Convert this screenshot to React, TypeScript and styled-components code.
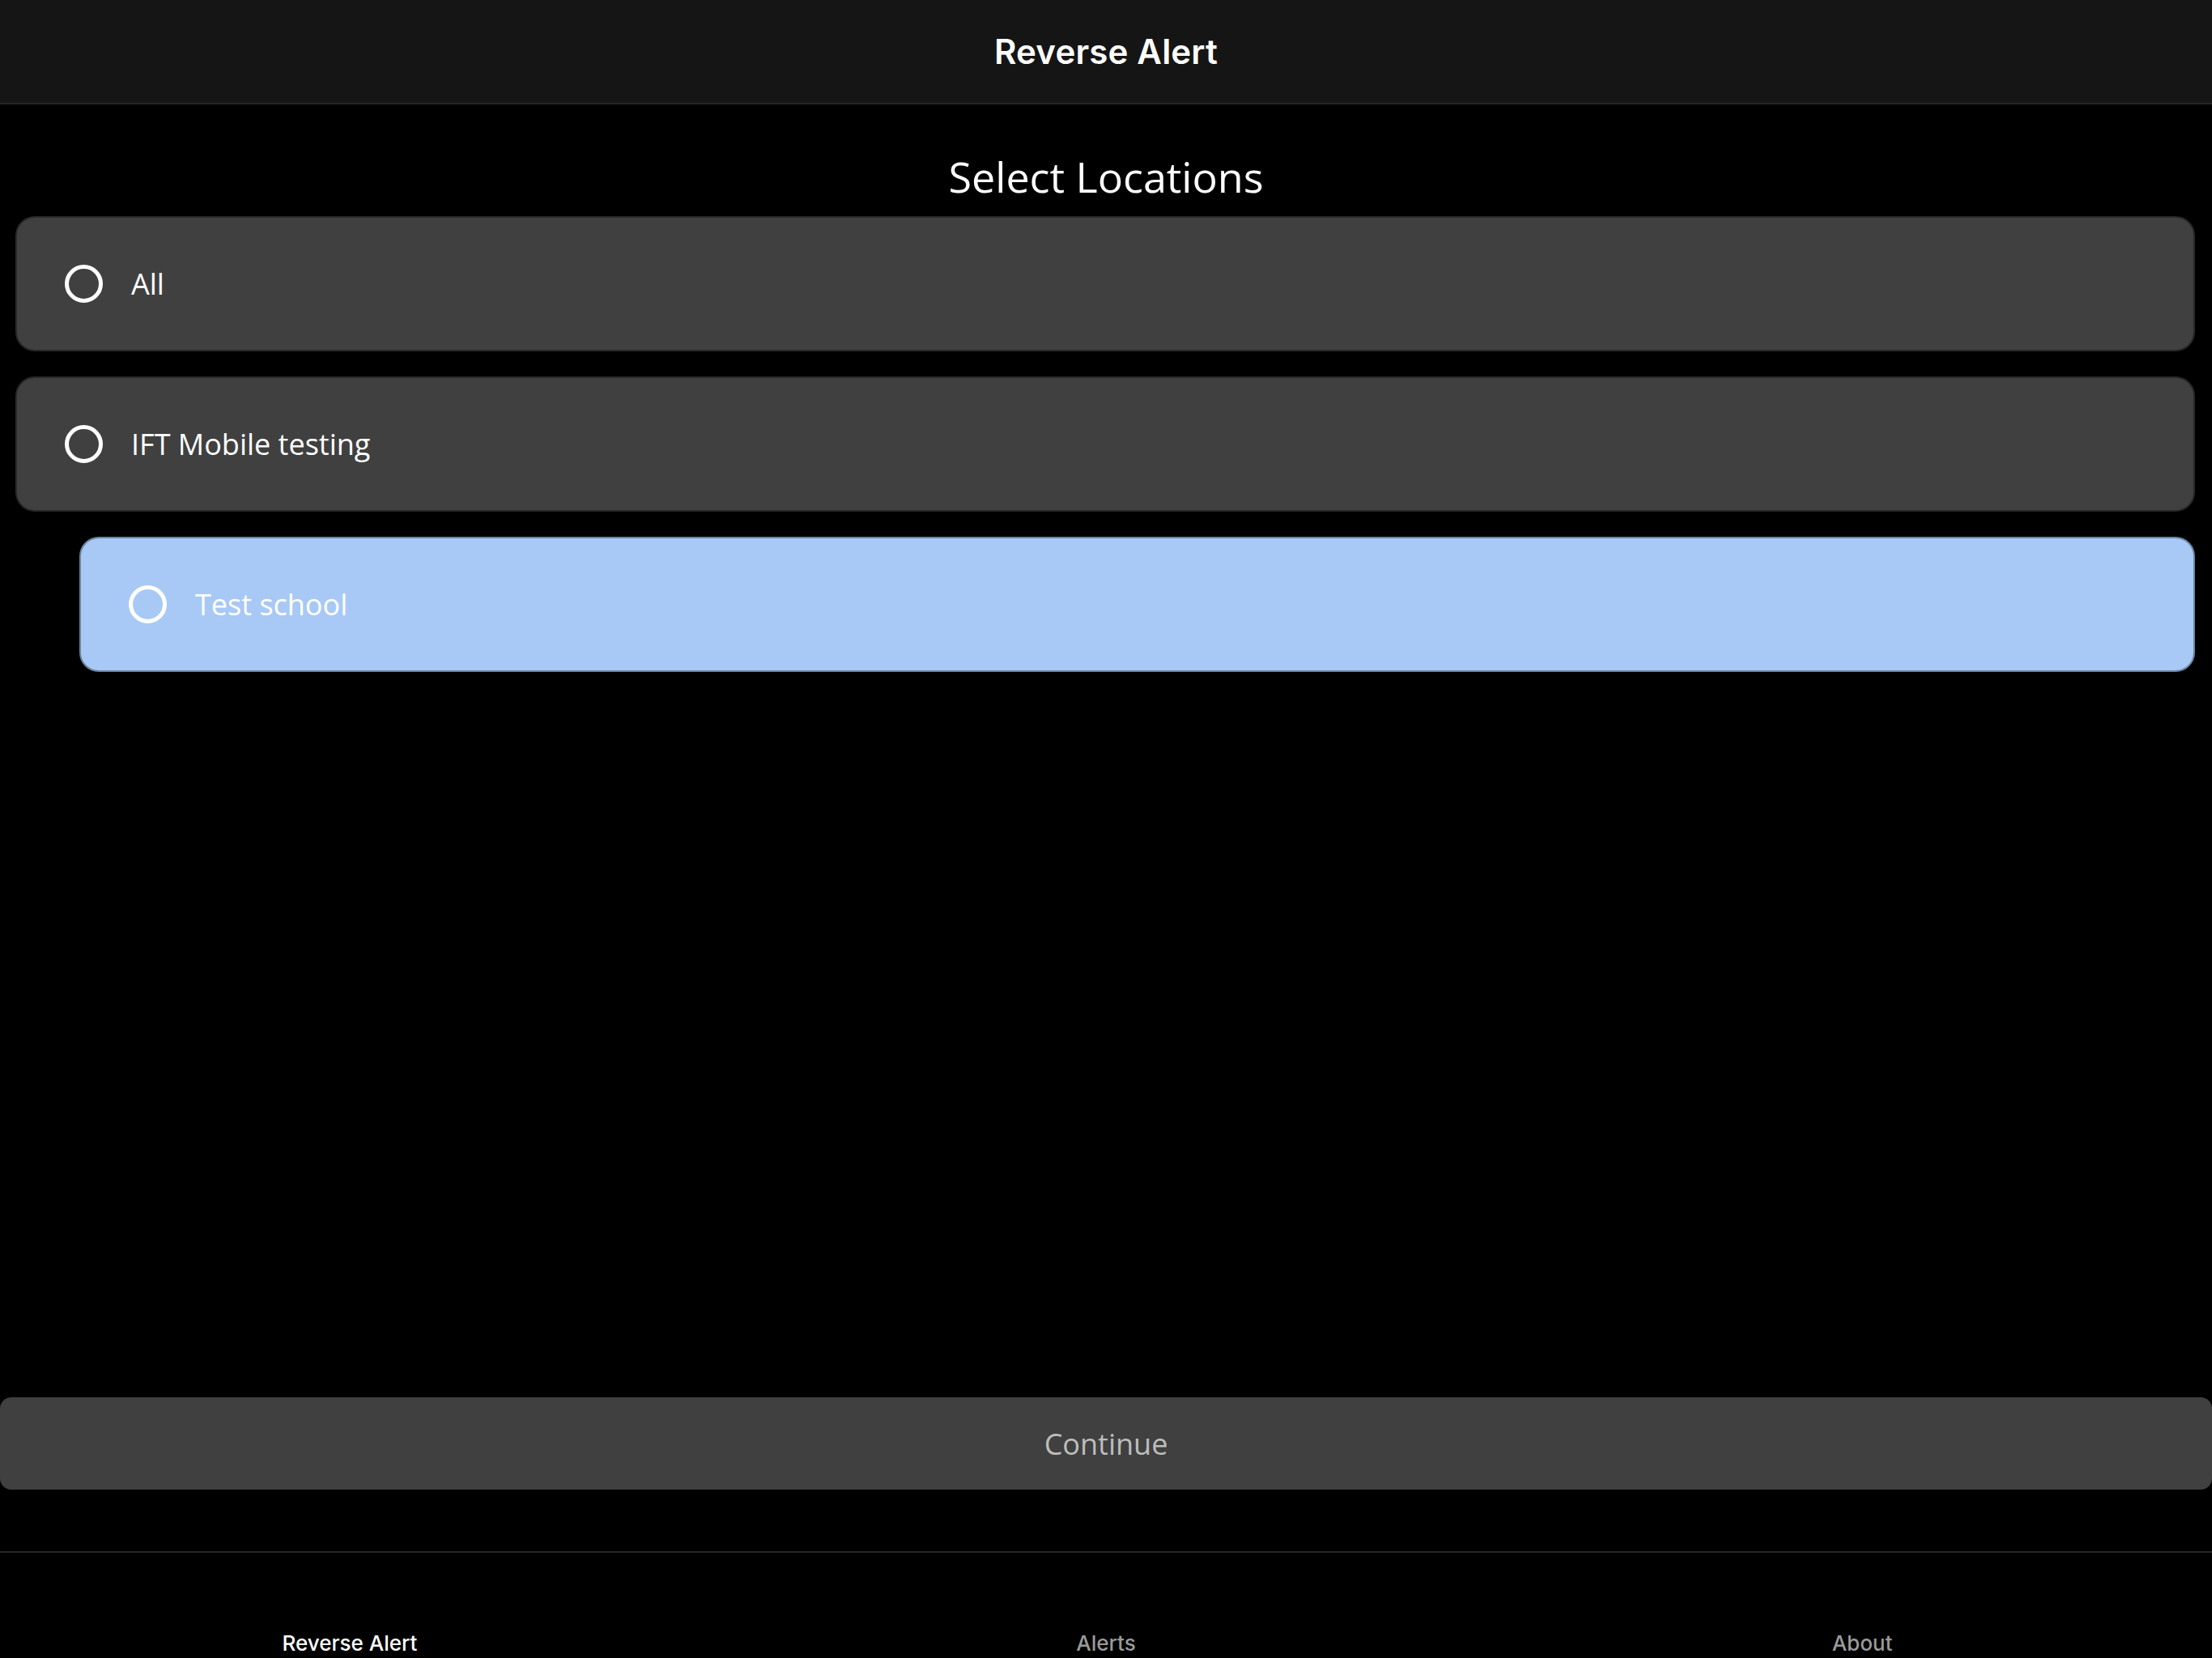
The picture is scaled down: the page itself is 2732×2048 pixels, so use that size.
import React, { useState } from 'react';
import styled, { createGlobalStyle } from 'styled-components';

const GlobalStyle = createGlobalStyle`
  * {
    box-sizing: border-box;
  }
  html,
  body {
    margin: 0;
    padding: 0;
    background: #000000;
  }
  body {
    font-family: 'Open Sans', 'Noto Sans', sans-serif;
    color: #ffffff;
  }
`;

const Screen = styled.div`
  width: 2732px;
  height: 2048px;
  display: flex;
  flex-direction: column;
  background: #000000;
  overflow: hidden;
`;

const NavBar = styled.header`
  height: 129px;
  flex-shrink: 0;
  display: flex;
  align-items: center;
  justify-content: center;
  background: #151515;
  border-bottom: 2px solid #262626;
  .title {
    font-family: 'Inter', 'Liberation Sans', sans-serif;
    font-weight: 600;
    font-size: 42px;
    letter-spacing: 0.2px;
    color: #ffffff;
  }
`;

const Main = styled.main`
  flex: 1;
  display: flex;
  flex-direction: column;
  padding: 53px 0 76px;
`;

const Heading = styled.h1`
  margin: 0 0 14px;
  text-align: center;
  font-family: 'Open Sans', sans-serif;
  font-weight: 400;
  font-size: 52px;
  line-height: 71px;
  color: #ffffff;
`;

const LocationList = styled.ul`
  list-style: none;
  margin: 0;
  padding: 0 21px 0 19px;
  display: flex;
  flex-direction: column;
  gap: 31px;
  flex: 1;
`;

const LocationRow = styled.li<{ $selected?: boolean; $depth: number }>`
  height: 167px;
  margin-left: ${(p) => p.$depth * 79}px;
  display: flex;
  align-items: center;
  gap: 35px;
  padding-left: 59px;
  border-radius: 24px;
  border: 2px solid rgba(0, 0, 0, 0.35);
  background: ${(p) => (p.$selected ? '#a8c9f6' : '#404040')};
  cursor: pointer;
  span {
    font-size: 36px;
    color: #ffffff;
  }
`;

const Radio = styled.span`
  width: 47px;
  height: 47px;
  flex-shrink: 0;
  border-radius: 50%;
  border: 5px solid #ffffff;
`;

const ContinueButton = styled.button`
  height: 114px;
  width: 100%;
  flex-shrink: 0;
  border: none;
  border-radius: 14px;
  background: #404040;
  font-family: 'Open Sans', sans-serif;
  font-size: 36px;
  color: #bdbdbd;
  cursor: pointer;
`;

const TabBar = styled.nav`
  height: 132px;
  flex-shrink: 0;
  display: flex;
  justify-content: center;
  align-items: flex-end;
  padding-bottom: 3px;
  border-top: 2px solid #262626;
  background: #000000;
`;

const TabItem = styled.div<{ $active?: boolean }>`
  width: 934px;
  flex-shrink: 0;
  text-align: center;
  font-family: 'Inter', 'Liberation Sans', sans-serif;
  font-weight: 500;
  font-size: 26px;
  color: ${(p) => (p.$active ? '#ffffff' : '#9a9a9a')};
`;

const locations = [
  { id: 'all', name: 'All', depth: 0 },
  { id: 'ift', name: 'IFT Mobile testing', depth: 0 },
  { id: 'school', name: 'Test school', depth: 1 },
];

const tabs = ['Reverse Alert', 'Alerts', 'About'];

const App = () => {
  const [highlighted, setHighlighted] = useState('school');
  return (
    <Screen>
      <GlobalStyle />
      <NavBar>
        <span className={'title'}>Reverse Alert</span>
      </NavBar>
      <Main>
        <Heading>Select Locations</Heading>
        <LocationList>
          {locations.map((loc) => (
            <LocationRow
              key={loc.id}
              $depth={loc.depth}
              $selected={highlighted === loc.id}
              onClick={() => setHighlighted(loc.id)}
            >
              <Radio />
              <span>{loc.name}</span>
            </LocationRow>
          ))}
        </LocationList>
        <ContinueButton>Continue</ContinueButton>
      </Main>
      <TabBar>
        {tabs.map((t, i) => (
          <TabItem key={t} $active={i === 0}>
            {t}
          </TabItem>
        ))}
      </TabBar>
    </Screen>
  );
};

export default App;
